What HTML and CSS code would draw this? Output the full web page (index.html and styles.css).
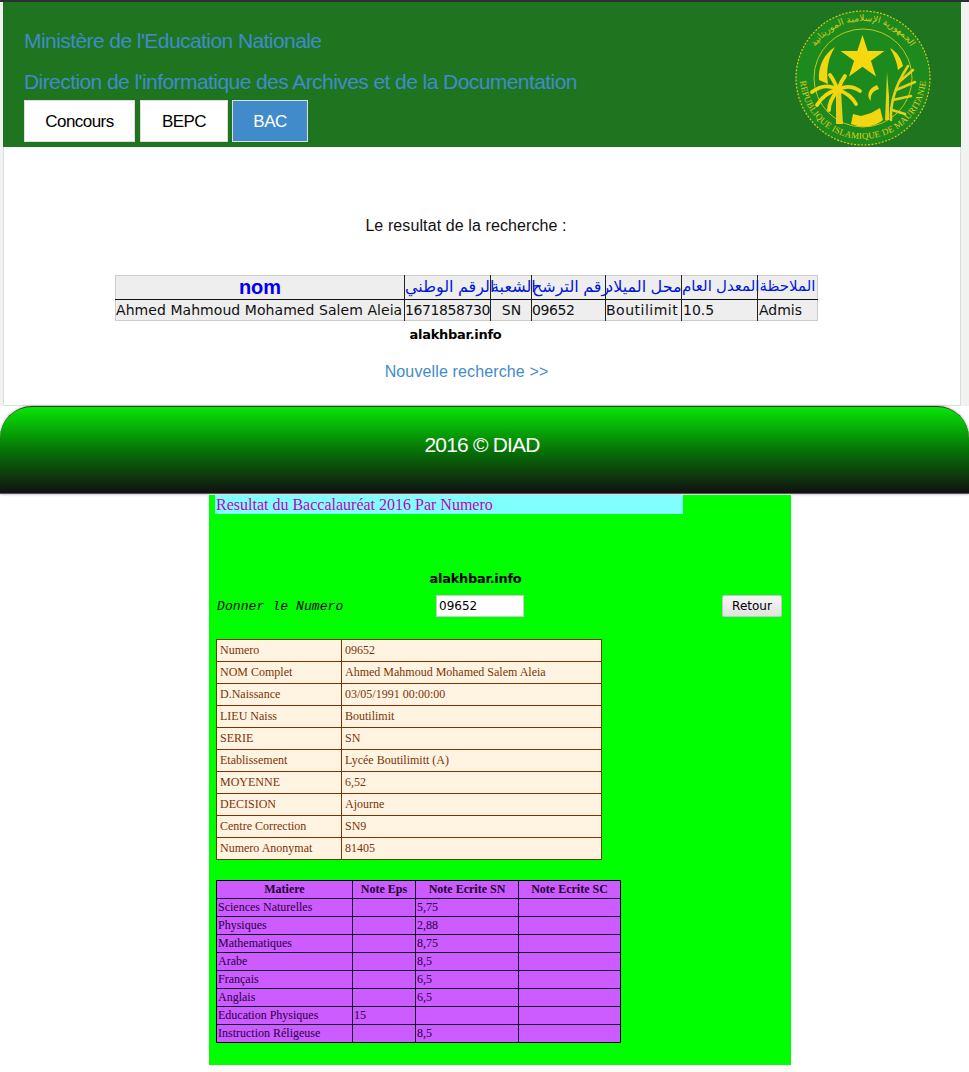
FILE: index.html
```html
<!DOCTYPE html>
<html lang="fr">
<head>
<meta charset="utf-8">
<title>Resultat</title>
<link rel="stylesheet" href="styles.css">
</head>
<body>
<div class="portal">
  <header class="masthead">
    <div class="masthead-text">
      <h1 class="ministry">Ministère de l'Education Nationale</h1>
      <h2 class="ministry second">Direction de l'informatique des Archives et de la Documentation</h2>
      <nav class="tabs">
        <a class="tab tab-concours">Concours</a>
        <a class="tab tab-bepc">BEPC</a>
        <a class="tab tab-bac active">BAC</a>
      </nav>
    </div>
    <svg class="emblem" viewBox="0 0 140 140" width="140" height="140" aria-hidden="true">
      <defs>
        <path id="arcBottom" d="M7 68 A63 63 0 0 0 133 68"/>
        <path id="arcTop" d="M13 70 A57 57 0 0 1 127 70"/>
      </defs>
      <circle cx="70" cy="70" r="67" fill="#1c8a1c" stroke="#d8c820" stroke-width="1.2" stroke-dasharray="2 1.5"/>
      <circle cx="70" cy="70" r="49" fill="none" stroke="#c8c41c" stroke-width="1"/>
      <text class="emblem-latin"><textPath href="#arcBottom" startOffset="50%" text-anchor="middle">REPUBLIQUE ISLAMIQUE DE MAURITANIE</textPath></text>
      <text class="emblem-arabic" direction="rtl"><textPath href="#arcTop" startOffset="50%" text-anchor="middle">الجمهورية  الإسلامية  الموريتانية</textPath></text>
      <path d="M42 39 C31 46 25 58 26 72 L35 76 C33 62 35 50 42 39 Z" fill="#f2d60f"/>
      <path d="M97 40 C104 44 108 50 110 58 L105 62 C104 54 101 47 97 40 Z" fill="#f2d60f"/>
      <path d="M69.5 27 L74.7 42.9 L91.4 42.9 L77.9 52.7 L83 68.6 L69.5 58.8 L56 68.6 L61.1 52.7 L47.6 42.9 L64.3 42.9 Z" fill="#f7d80e"/>
      <path d="M60 106 L68 108 L78 105 L87 100 L90 112 C80 120 68 120 58 116 Z" fill="#f2d60f"/>
      <path d="M43 82 L43 116 L50 116 L48 82 Z" fill="#e6d018"/>
      <g fill="none" stroke="#f2d60f" stroke-width="3.8" stroke-linecap="round">
        <path d="M45 82 C36 76 27 78 19 84"/>
        <path d="M45 82 C36 83 28 90 24 97"/>
        <path d="M45 82 C40 88 36 94 36 102"/>
        <path d="M45 82 C42 76 41 72 37 67"/>
        <path d="M45 82 C47 76 49 72 52 68"/>
        <path d="M45 82 C53 77 61 79 67 83"/>
        <path d="M45 82 C53 84 60 90 63 96"/>
      </g>
      <path d="M84 77 C75 80 73 89 78 93 C77 88 79 83 86 81 Z" fill="#f2d60f"/>
      <g fill="none" stroke="#e6d018" stroke-width="2.6" stroke-linecap="round">
        <path d="M98 112 C97 96 102 78 115 58"/>
        <path d="M106 74 L120 62"/>
        <path d="M103 82 L122 74"/>
        <path d="M100 92 L118 88"/>
        <path d="M99 102 L112 106"/>
      </g>
      <path d="M92 112 L94 64 L96 88 L96 112 Z" fill="#e6d018"/>
    </svg>
  </header>

  <main class="results">
    <p class="lead">Le resultat de la recherche :</p>
    <table class="result-table">
      <thead>
        <tr>
          <th class="rc-name nom">nom</th>
          <th class="rc-nni">الرقم الوطني</th>
          <th class="rc-serie">الشعبة</th>
          <th class="rc-num">رقم الترشح</th>
          <th class="rc-lieu">محل الميلاد</th>
          <th class="rc-moy">المعدل العام</th>
          <th class="rc-note">الملاحظة</th>
        </tr>
      </thead>
      <tbody>
        <tr>
          <td>Ahmed Mahmoud Mohamed Salem Aleia</td>
          <td class="digits">1671858730</td>
          <td class="centered">SN</td>
          <td class="digits">09652</td>
          <td class="spaced">Boutilimit</td>
          <td>10.5</td>
          <td>Admis</td>
        </tr>
      </tbody>
    </table>
    <p class="brand">alakhbar.info</p>
    <a class="again">Nouvelle recherche &gt;&gt;</a>
  </main>
</div>

<footer class="site-footer">2016 © DIAD</footer>

<section class="bac">
  <div class="bac-title">Resultat du Baccalauréat 2016 Par Numero</div>
  <p class="bac-brand">alakhbar.info</p>
  <form class="lookup">
    <label class="lookup-label" for="numero">Donner le Numero</label>
    <input class="lookup-input" id="numero" type="text" value="09652">
    <button class="lookup-button" type="button">Retour</button>
  </form>
  <table class="identity">
    <tr><td class="id-key">Numero</td><td>09652</td></tr>
    <tr><td class="id-key">NOM Complet</td><td>Ahmed Mahmoud Mohamed Salem Aleia</td></tr>
    <tr><td class="id-key">D.Naissance</td><td>03/05/1991 00:00:00</td></tr>
    <tr><td class="id-key">LIEU Naiss</td><td>Boutilimit</td></tr>
    <tr><td class="id-key">SERIE</td><td>SN</td></tr>
    <tr><td class="id-key">Etablissement</td><td>Lycée Boutilimitt (A)</td></tr>
    <tr><td class="id-key">MOYENNE</td><td>6,52</td></tr>
    <tr><td class="id-key">DECISION</td><td>Ajourne</td></tr>
    <tr><td class="id-key">Centre Correction</td><td>SN9</td></tr>
    <tr><td class="id-key">Numero Anonymat</td><td>81405</td></tr>
  </table>
  <table class="grades">
    <thead>
      <tr><th class="g-sub">Matiere</th><th class="g-eps">Note Eps</th><th class="g-sn">Note Ecrite SN</th><th>Note Ecrite SC</th></tr>
    </thead>
    <tbody>
      <tr><td>Sciences Naturelles</td><td></td><td>5,75</td><td></td></tr>
      <tr><td>Physiques</td><td></td><td>2,88</td><td></td></tr>
      <tr><td>Mathematiques</td><td></td><td>8,75</td><td></td></tr>
      <tr><td>Arabe</td><td></td><td>8,5</td><td></td></tr>
      <tr><td>Français</td><td></td><td>6,5</td><td></td></tr>
      <tr><td>Anglais</td><td></td><td>6,5</td><td></td></tr>
      <tr><td>Education Physiques</td><td>15</td><td></td><td></td></tr>
      <tr><td>Instruction Réligeuse</td><td></td><td>8,5</td><td></td></tr>
    </tbody>
  </table>
</section>
</body>
</html>
```
FILE: styles.css
```css
* { box-sizing: border-box; }
html, body { margin: 0; padding: 0; }
body {
  width: 969px;
  height: 1072px;
  overflow: hidden;
  background: #fff;
  font-family: "Liberation Sans", Arial, sans-serif;
  color: #000;
}

.portal {
  width: 969px;
  height: 406px;
  padding: 2px 8px 0 3px;
  background: linear-gradient(#2c2f33 0, #2c2f33 2px, #f1f3f1 2px);
}

.masthead {
  height: 145px;
  background: #1e741f;
  display: flex;
  justify-content: space-between;
  padding: 7px 28px 0 21px;
}
.masthead-text { display: flex; flex-direction: column; }
.ministry {
  margin: 19px 0 0;
  font-size: 21px;
  line-height: 26px;
  font-weight: 400;
  letter-spacing: -0.57px;
  color: #428bca;
  white-space: nowrap;
}
.second { margin-top: 15px; }
.tabs { display: flex; gap: 5px; margin-top: 5px; }
.tab {
  height: 42px;
  display: flex;
  align-items: center;
  justify-content: center;
  padding-top: 1px;
  background: #fff;
  border: 1px solid #ddd;
  font-size: 17px;
  letter-spacing: -0.55px;
  color: #000;
}
.tab-concours { width: 111px; }
.tab-bepc { width: 88px; }
.tab-bac { width: 76px; margin-left: -1px; }
.active { background: #428bca; color: #fff; }
.emblem { margin-top: -1px; flex: none; }
.emblem-latin { font: 9px "Liberation Serif", serif; fill: #e0d020; letter-spacing: 0.2px; }
.emblem-arabic { font: 9px "DejaVu Sans", sans-serif; fill: #d8cc20; }

.results {
  height: 259px;
  background: #fff;
  border: 1px solid #ddd;
  border-width: 0 1px 1px;
  text-align: center;
  padding-top: 69px;
}
.lead {
  margin: 0;
  padding-right: 32px;
  font-size: 16px;
  line-height: 20px;
  letter-spacing: 0.1px;
  color: #111;
}

.result-table {
  table-layout: fixed;
  width: 703px;
  margin: 39px 0 0 111px;
  border-collapse: collapse;
  background: #eee;
  border: 1px solid #ccc;
  font-family: "DejaVu Sans", sans-serif;
  font-size: 14px;
}
.result-table th {
  height: 24px;
  padding: 0 0 3px;
  font: 400 16px "Liberation Sans", "DejaVu Sans", sans-serif;
  color: #0018d8;
  text-align: center;
  white-space: nowrap;
  border-right: 1px solid #222;
  border-bottom: 1px solid #111;
}
.result-table th.nom { font-size: 20px; font-weight: 700; color: #0000ee; padding: 0; }
.result-table th.rc-moy { font-size: 15px; }
.result-table th.rc-note { font-size: 15px; }
.result-table td {
  height: 21px;
  padding: 0 0 0 1px;
  text-align: left;
  white-space: nowrap;
  overflow: hidden;
  color: #111;
  border-right: 1px solid #222;
}
.result-table th:last-child, .result-table td:last-child { border-right: 0; }
.result-table td:first-child { padding-left: 0; letter-spacing: 0.06px; }
.result-table td.centered { text-align: center; }
.result-table td.digits { letter-spacing: -0.42px; padding-left: 0; }
.result-table td.spaced { letter-spacing: 0.5px; padding-left: 0; }
.rc-name { width: 289px; }
.rc-nni { width: 86px; }
.rc-serie { width: 41px; }
.rc-num { width: 74px; }
.rc-lieu { width: 76px; }
.rc-moy { width: 76px; }

.brand {
  margin: 5px 0 0;
  padding-right: 53px;
  font-family: "DejaVu Sans", sans-serif;
  font-size: 13px;
  line-height: 17px;
  font-weight: 700;
  letter-spacing: -0.3px;
  text-align: center;
}
.again {
  display: block;
  margin-top: 19px;
  padding-right: 31px;
  font-size: 16px;
  line-height: 20px;
  letter-spacing: 0.13px;
  color: #428bca;
}

.site-footer {
  width: 969px;
  height: 88px;
  padding: 25px 5px 0 0;
  border-top: 1px solid #1c3b1c;
  border-bottom: 1px solid #555;
  border-radius: 32px 32px 0 0;
  background: linear-gradient(#07e607 0, #067806 48%, #111 100%);
  box-shadow: 0 0 3px #999;
  color: #fff;
  font-size: 21px;
  line-height: 26px;
  letter-spacing: -0.8px;
  text-align: center;
}

.bac {
  width: 582px;
  height: 570px;
  margin: 1px 0 0 209px;
  padding: 0 9px 0 7px;
  background: #0f0;
}
.bac-title {
  width: 468px;
  height: 19px;
  background: #80ffff;
  color: #c000c0;
  font: 16px/19px "Liberation Serif", serif;
  white-space: nowrap;
  margin-left: -1px;
  padding-left: 1px;
}
.bac-brand {
  margin: 56px 0 0;
  padding-right: 47px;
  font-family: "DejaVu Sans", sans-serif;
  font-size: 13px;
  line-height: 17px;
  font-weight: 700;
  letter-spacing: -0.3px;
  text-align: center;
}
.lookup {
  display: flex;
  align-items: center;
  height: 24px;
  margin-top: 7px;
  padding-left: 1px;
}
.lookup-label {
  width: 219px;
  font: italic 13px "Liberation Mono", monospace;
  letter-spacing: 0.1px;
  padding-top: 1px;
}
.lookup-input {
  width: 88px;
  height: 22px;
  padding: 0 2px;
  border: 1px solid #ccc;
  background: #fff;
  font: 12px "DejaVu Sans", sans-serif;
  color: #000;
}
.lookup-button {
  width: 60px;
  height: 22px;
  margin-left: 198px;
  padding: 0;
  border: 1px solid #c4c4c4;
  border-radius: 2px;
  background: linear-gradient(#f6f6f6, #e2e2e2);
  font: 12px "DejaVu Sans", sans-serif;
  color: #000;
}

.identity {
  table-layout: fixed;
  width: 386px;
  margin: 21px 0 0;
  border-collapse: collapse;
  background: #fff3e2;
  color: #7b3306;
  font: 12px "Liberation Serif", serif;
  border: 1px solid #7b3306;
}
.identity td {
  height: 22px;
  padding: 0 0 0 3px;
  border: 1px solid #7b3306;
  white-space: nowrap;
}
.id-key { width: 125px; }

.grades {
  table-layout: fixed;
  width: 405px;
  margin: 20px 0 0;
  border-collapse: collapse;
  background: #cc5cff;
  color: #2a0040;
  font: 12px "Liberation Serif", serif;
}
.grades th, .grades td {
  height: 18px;
  padding: 0 0 0 1px;
  border: 1px solid #10002a;
  white-space: nowrap;
  overflow: hidden;
}
.grades th { padding: 0; text-align: center; font-weight: 700; color: #1c0030; }
.g-sub { width: 136px; }
.g-eps { width: 63px; }
.g-sn { width: 103px; }
```
